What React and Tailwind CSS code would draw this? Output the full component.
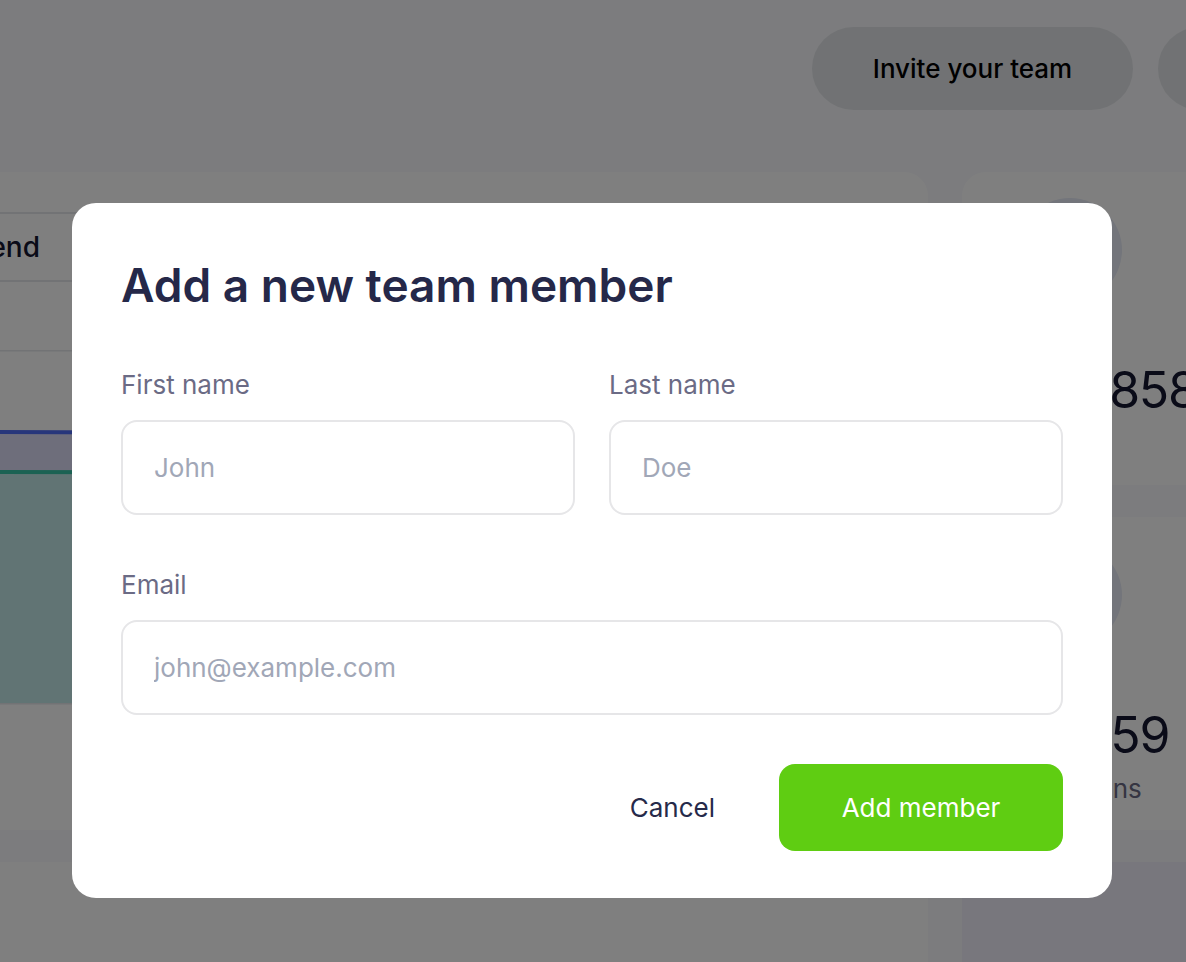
import React from 'react';

const font = "font-['Inter','Liberation_Sans',sans-serif]";

const StatCard = ({ value, label, tint = 'bg-white' }) => (
  <div className={`${tint} rounded-[24px] h-[313px] w-[300px] shrink-0 pl-[56px] pt-[26px]`}>
    <div className="w-[104px] h-[104px] rounded-full bg-[#e6eaf6]" />
    <div className="mt-[63px] text-[50px] leading-none text-[#141631] tracking-tight whitespace-nowrap">{value}</div>
    <div className="mt-[9px] text-[26px] text-[#6b6b85] whitespace-nowrap">{label}</div>
  </div>
);

const Chart = () => (
  <svg width="928" height="420" viewBox="0 0 928 420" className="block">
    {[0, 88, 177, 265, 353].map((y) => (
      <line key={y} x1="0" x2="928" y1={y + 0.5} y2={y + 0.5} stroke="#e4e6ea" strokeWidth="2" />
    ))}
    <path d="M0 82 L928 86 L928 122 L0 122 Z" fill="#dcdcf6" />
    <path d="M0 122 L928 124 L928 353 L0 353 Z" fill="#c2e8e8" />
    <path d="M0 82 L928 86" stroke="#4f6cf6" strokeWidth="4" fill="none" />
    <path d="M0 122 L928 124" stroke="#36c4a6" strokeWidth="4" fill="none" />
  </svg>
);

const Dashboard = () => (
  <div className="w-[1186px] h-[962px] bg-[#f8f9fc] overflow-hidden">
    <header className="h-[172px] flex justify-end items-start pt-[27px] gap-[25px] -mr-[192px]">
      <button className="w-[321px] h-[83px] rounded-full bg-[#e3e5e9] text-[26px] font-medium text-black">
        Invite your team
      </button>
      <button className="w-[220px] h-[83px] rounded-full bg-[#e3e5e9] text-[26px] font-medium text-black">
        New report
      </button>
    </header>
    <div className="flex gap-[34px]">
      <div className="flex flex-col gap-[32px] shrink-0">
        <div className="w-[968px] -ml-[40px] h-[658px] bg-white rounded-[24px] pt-[40px] overflow-hidden">
          <div className="flex -ml-[72px] pl-[40px]">
            <div className="flex h-[70px] border-2 border-[#e4e6ea] rounded-[12px]">
              <div className="pl-[24px] pr-[48px] flex items-center text-[28px] font-medium text-[#141631]">Spend</div>
              <div className="px-[24px] flex items-center text-[28px] text-[#6b6b85] border-l-2 border-[#e4e6ea]">Revenue</div>
            </div>
          </div>
          <div className="mt-[68px] ml-[40px]">
            <Chart />
          </div>
        </div>
        <div className="w-[968px] -ml-[40px] h-[200px] bg-white rounded-[24px]" />
      </div>
      <div className="flex flex-col gap-[32px]">
        <StatCard value="$21,858" label="Spent" />
        <StatCard value="$1,259" label="Donations" />
        <div className="bg-[#f0eefa] rounded-[24px] h-[200px] w-[300px]" />
      </div>
    </div>
  </div>
);

const Field = ({ label, placeholder, className = '' }) => (
  <label className={`flex flex-col ${className}`}>
    <span className="text-[26px] leading-[32px] text-[#6b6b85]">{label}</span>
    <input
      placeholder={placeholder}
      className="mt-[19px] h-[95px] w-full rounded-[16px] border-2 border-[#e6e6e8] px-[31px] text-[26px] text-[#262a4a] placeholder:text-[#a1a7b7] outline-none"
    />
  </label>
);

export default function App() {
  return (
    <div className={`relative w-[1186px] h-[962px] overflow-hidden ${font}`}>
      <Dashboard />
      <div className="absolute inset-0 bg-black/50" />
      <div className="absolute left-[72px] top-[203px] w-[1040px] h-[695px] bg-white rounded-[24px] px-[49px] pt-[50px]">
        <h2 className="text-[46px] leading-[64px] font-semibold text-[#252849]">
          Add a new team member
        </h2>
        <div className="mt-[52px] grid grid-cols-2 gap-x-[34px]">
          <Field label="First name" placeholder="John" />
          <Field label="Last name" placeholder="Doe" />
        </div>
        <Field label="Email" placeholder="john@example.com" className="mt-[54px]" />
        <div className="mt-[49px] flex justify-end items-center gap-[64px]">
          <button className="text-[26px] text-[#262a4a]">Cancel</button>
          <button className="w-[284px] h-[87px] rounded-[16px] bg-[#5fcd12] text-[26px] text-white">
            Add member
          </button>
        </div>
      </div>
    </div>
  );
}
